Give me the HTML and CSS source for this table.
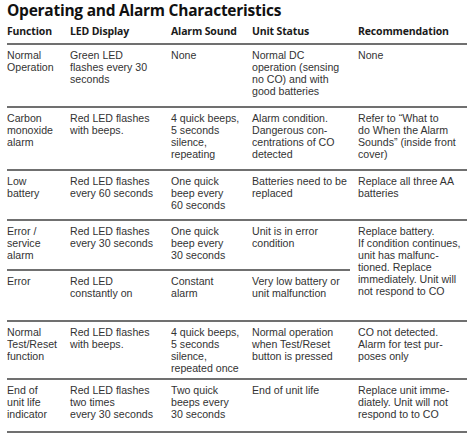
FILE: index.html
```html
<!DOCTYPE html>
<html lang="en">
<head>
<meta charset="utf-8">
<title>Operating and Alarm Characteristics</title>
<link rel="stylesheet" href="styles.css">
</head>
<body>
<h1 class="title">Operating and Alarm Characteristics</h1>
<div class="table">
  <div class="cell th">Function</div>
  <div class="cell th">LED Display</div>
  <div class="cell th">Alarm Sound</div>
  <div class="cell th">Unit Status</div>
  <div class="cell th">Recommendation</div>

  <div class="cell">Normal<br>Operation</div>
  <div class="cell">Green LED<br>flashes every 30<br>seconds</div>
  <div class="cell">None</div>
  <div class="cell">Normal DC<br>operation (sensing<br>no CO) and with<br>good batteries</div>
  <div class="cell">None</div>

  <div class="cell">Carbon<br>monoxide<br>alarm</div>
  <div class="cell">Red LED flashes<br>with beeps.</div>
  <div class="cell">4 quick beeps,<br>5 seconds<br>silence,<br>repeating</div>
  <div class="cell">Alarm condition.<br>Dangerous con-<br>centrations of CO<br>detected</div>
  <div class="cell">Refer to “What to<br>do When the Alarm<br>Sounds” (inside front<br>cover)</div>

  <div class="cell">Low<br>battery</div>
  <div class="cell">Red LED flashes<br>every 60 seconds</div>
  <div class="cell">One quick<br>beep every<br>60 seconds</div>
  <div class="cell">Batteries need to be<br>replaced</div>
  <div class="cell">Replace all three AA<br>batteries</div>

  <div class="cell">Error /<br>service<br>alarm</div>
  <div class="cell">Red LED flashes<br>every 30 seconds</div>
  <div class="cell">One quick<br>beep every<br>30 seconds</div>
  <div class="cell cut">Unit is in error<br>condition</div>
  <div class="cell span2">Replace battery.<br>If condition continues,<br>unit has malfunc-<br>tioned. Replace<br>immediately. Unit will<br>not respond to CO</div>

  <div class="cell">Error</div>
  <div class="cell">Red LED<br>constantly on</div>
  <div class="cell">Constant<br>alarm</div>
  <div class="cell">Very low battery or<br>unit malfunction</div>

  <div class="cell">Normal<br>Test/Reset<br>function</div>
  <div class="cell">Red LED flashes<br>with beeps.</div>
  <div class="cell">4 quick beeps,<br>5 seconds<br>silence,<br>repeated once</div>
  <div class="cell">Normal operation<br>when Test/Reset<br>button is pressed</div>
  <div class="cell">CO not detected.<br>Alarm for test pur-<br>poses only</div>

  <div class="cell">End of<br>unit life<br>indicator</div>
  <div class="cell">Red LED flashes<br>two times<br>every 30 seconds</div>
  <div class="cell">Two quick<br>beeps every<br>30 seconds</div>
  <div class="cell">End of unit life</div>
  <div class="cell">Replace unit imme-<br>diately. Unit will not<br>respond to to CO</div>
</div>
</body>
</html>
```
FILE: styles.css
```css
html, body {
  background: #ffffff;
}
body {
  margin: 0 7px;
  font-family: "Liberation Sans", Arial, sans-serif;
  color: #333333;
}
.title {
  margin: 0;
  padding-top: 3.2px;
  font-family: "Open Sans", "Noto Sans", sans-serif;
  font-size: 15.5px;
  line-height: 14.8px;
  font-weight: 700;
  letter-spacing: -0.25px;
  color: #111111;
}
.table {
  display: grid;
  width: 460px;
  grid-template-columns: 63px 101px 81px 106px 109px;
  grid-template-rows: 27px 63px 63px 50px 50px 51px 58px 53px;
}
.cell {
  box-sizing: border-box;
  border-bottom: 2px solid #707070;
  padding-top: 4.5px;
  font-size: 10.6px;
  line-height: 12px;
  white-space: nowrap;
}
.th {
  padding-top: 7px;
  font-family: "Open Sans", "Noto Sans", sans-serif;
  font-size: 10.5px;
  line-height: 13px;
  font-weight: 700;
  letter-spacing: -0.15px;
  color: #1a1a1a;
}
.cut {
  border-bottom: none;
  background: linear-gradient(#707070, #707070) left bottom / calc(100% - 8px) 2px no-repeat;
}
.span2 {
  grid-row: span 2;
}
```
